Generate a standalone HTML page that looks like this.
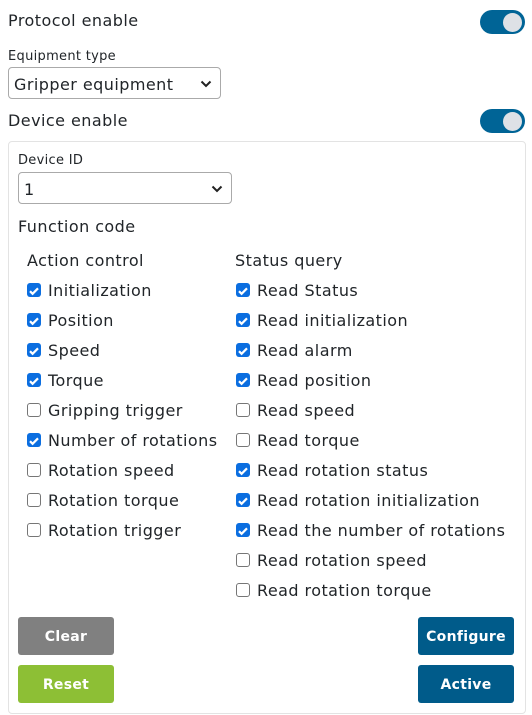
<!DOCTYPE html>
<html><head><meta charset="utf-8"><style>
*{box-sizing:border-box;margin:0;padding:0}
body{width:532px;height:715px;background:#fff;font-family:"DejaVu Sans",Verdana,sans-serif;color:#212529;position:relative;overflow:hidden}
.a{position:absolute;white-space:nowrap}
.t{font-size:16px;letter-spacing:0.45px}
.s{font-size:13px;letter-spacing:0.3px}
.tog{position:absolute;left:480px;width:45px;height:24px;border-radius:12px;background:#006496}
.tog::after{content:"";position:absolute;right:3px;top:2.5px;width:19px;height:19px;border-radius:50%;background:#dee1e6}
.sel{position:absolute;border:1px solid #aaa;border-radius:4px;height:32px;font-size:16px;letter-spacing:0.45px;padding:7px 0 0 5px}
.sel svg{position:absolute;right:8px;top:12px}
.card{position:absolute;left:8px;top:141px;width:518px;height:573px;border:1px solid #e3e3e3;border-radius:4px}
.cb{position:absolute;width:14px;height:14px;border-radius:3px}
.on{background:#0b6ee0}
.off{border:1px solid #767676;background:#fff}
.btn{position:absolute;width:96px;height:38px;border-radius:3px;color:#fff;font-weight:bold;font-size:14px;letter-spacing:0.3px;text-align:center;line-height:40px}
</style></head><body>
<div class="a t" style="left:8px;top:11px">Protocol enable</div>
<div class="tog" style="top:10px"></div>
<div class="a s" style="left:8px;top:49px">Equipment type</div>
<div class="sel" style="left:8px;top:67px;width:213px">Gripper equipment<svg width="12" height="8" viewBox="0 0 12 8"><path d="M1.5 1.5L6 6l4.5-4.5" stroke="#222" stroke-width="2" fill="none"/></svg></div>
<div class="a t" style="left:8px;top:111px">Device enable</div>
<div class="tog" style="top:109px"></div>
<div class="card"></div>
<div class="a s" style="left:18px;top:153px">Device ID</div>
<div class="sel" style="left:18px;top:172px;width:214px">1<svg width="12" height="8" viewBox="0 0 12 8"><path d="M1.5 1.5L6 6l4.5-4.5" stroke="#222" stroke-width="2" fill="none"/></svg></div>
<div class="a t" style="left:18px;top:217px">Function code</div>
<div class="a t" style="left:27px;top:251px">Action control</div>
<div class="a t" style="left:235px;top:251px">Status query</div>
<div id="rows"></div>
<div class="btn" style="left:18px;top:617px;background:#808080">Clear</div>
<div class="btn" style="left:18px;top:665px;background:#8dbf35">Reset</div>
<div class="btn" style="left:418px;top:617px;background:#005b8a">Configure</div>
<div class="btn" style="left:418px;top:665px;background:#005b8a">Active</div>
<script>
var L=[["Initialization",1],["Position",1],["Speed",1],["Torque",1],["Gripping trigger",0],["Number of rotations",1],["Rotation speed",0],["Rotation torque",0],["Rotation trigger",0]];
var R=[["Read Status",1],["Read initialization",1],["Read alarm",1],["Read position",1],["Read speed",0],["Read torque",0],["Read rotation status",1],["Read rotation initialization",1],["Read the number of rotations",1],["Read rotation speed",0],["Read rotation torque",0]];
var h="";
function add(a,x){a.forEach(function(r,i){var y=281+i*30;
h+='<div class="cb '+(r[1]?'on':'off')+'" style="left:'+x+'px;top:'+(y+2)+'px">'+(r[1]?'<svg width="14" height="14" viewBox="0 0 14 14"><path d="M3 7.2l2.6 2.6L11 4.3" stroke="#fff" stroke-width="2.2" fill="none"/></svg>':'')+'</div>';
h+='<div class="a t" style="left:'+(x+21)+'px;top:'+y+'px">'+r[0]+'</div>';});}
add(L,27);add(R,236);
document.getElementById("rows").innerHTML=h;
</script>
</body></html>
